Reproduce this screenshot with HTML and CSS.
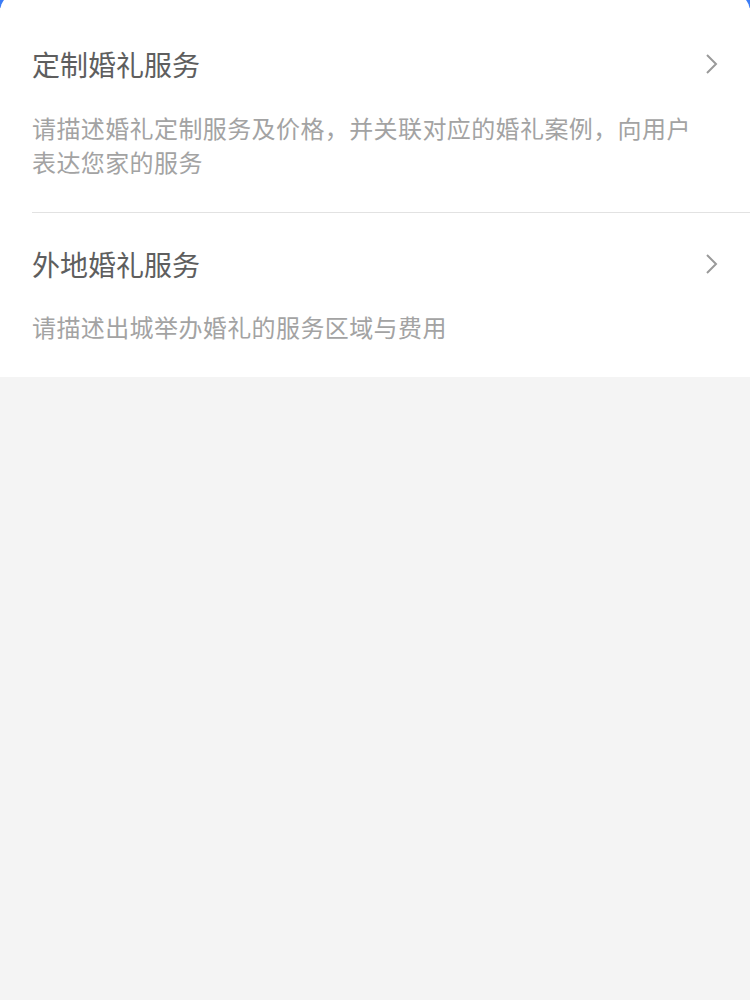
FILE: index.html
```html
<!DOCTYPE html>
<html>
<head>
    <title>婚礼服务</title>
    <meta name="viewport" content="width=device-width, initial-scale=1">
    <link rel="stylesheet" href="styles.css">
</head>
<body>
    <div class="top-bg"></div>
    <div class="card">
        <div class="item">
            <div class="item-head">
                <span class="item-title">定制婚礼服务</span>
                <svg class="arrow" width="16" height="22" viewBox="0 0 16 22">
                    <polyline points="3,2 12,11 3,20" fill="none" stroke="#9a9a9a" stroke-width="2"/>
                </svg>
            </div>
            <p class="item-desc">请描述婚礼定制服务及价格，并关联对应的婚礼案例，向用户表达您家的服务</p>
        </div>
        <div class="item">
            <div class="item-head">
                <span class="item-title">外地婚礼服务</span>
                <svg class="arrow" width="16" height="22" viewBox="0 0 16 22">
                    <polyline points="3,2 12,11 3,20" fill="none" stroke="#9a9a9a" stroke-width="2"/>
                </svg>
            </div>
            <p class="item-desc">请描述出城举办婚礼的服务区域与费用</p>
        </div>
    </div>
</body>
</html>
```

FILE: styles.css
```css
html, body {
    margin: 0;
    padding: 0;
}
body {
    background-color: #f4f4f4;
    font-family: "Noto Sans CJK SC", "Noto Sans", sans-serif;
}
.top-bg {
    height: 40px;
    background-color: #3b7cf6;
    margin-top: -32px;
}
.card {
    position: relative;
    margin-top: -16px;
    padding-top: 20px;
    padding-left: 32px;
    background-color: #fff;
    border-radius: 20px 20px 0 0;
}
.item {
    padding: 31px 30px 33px 0;
    border-bottom: 1px solid #e2e2e2;
}
.item:first-child {
    padding-top: 32px;
}
.item:first-child .item-desc {
    margin-top: 27px;
}
.item:last-child {
    border-bottom: none;
}
.item-head {
    display: flex;
    align-items: center;
    justify-content: space-between;
    height: 40px;
}
.item-title {
    font-size: 28px;
    line-height: 40px;
    color: #5e5e5e;
}
.item-desc {
    margin: 26px 10px 0 0;
    font-size: 24px;
    line-height: 34px;
    letter-spacing: 0.4px;
    color: #a3a3a3;
}
```
